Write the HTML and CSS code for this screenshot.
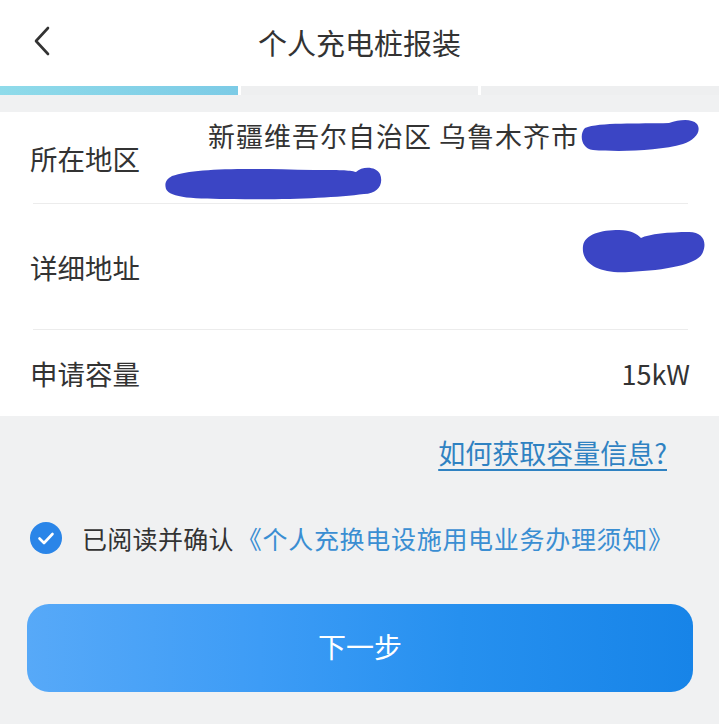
FILE: index.html
```html
<!DOCTYPE html>
<html lang="zh">
<head>
<meta charset="utf-8">
<title>个人充电桩报装</title>
<link rel="stylesheet" href="styles.css">
</head>
<body>
<div class="page">
  <header class="topbar">
    <svg class="back" width="24" height="34" viewBox="0 0 24 34"><polyline points="16,3 4,16 16,29" fill="none" stroke="#333" stroke-width="2.6" stroke-linecap="round" stroke-linejoin="round"/></svg>
    <h1 class="title">个人充电桩报装</h1>
  </header>
  <div class="steps">
    <div class="step active"></div>
    <div class="step"></div>
    <div class="step"></div>
  </div>
  <section class="card">
    <div class="row row-area">
      <div class="label">所在地区</div>
      <div class="value-area">
        <div class="vline">新疆维吾尔自治区 乌鲁木齐市</div>
        <div class="vline">&nbsp;</div>
      </div>
      <svg class="mark mark1" width="122" height="36" viewBox="0 0 122 36"><path d="M6 10 C20 4 60 6 90 5 C100 2 112 0 118 6 C123 13 116 22 104 26 C80 33 40 34 14 32 C2 31 0 16 6 10 Z" fill="#3b45c5"/></svg>
      <svg class="mark mark2" width="220" height="38" viewBox="0 0 220 38"><path d="M8 12 C30 4 80 4 150 6 C175 6 185 6 192 8 C198 2 212 2 216 10 C220 20 214 30 200 30 C170 34 120 36 70 35 C30 35 6 34 2 25 C0 18 3 15 8 12 Z" fill="#3b45c5"/></svg>
    </div>
    <div class="divider"></div>
    <div class="row row-addr">
      <div class="label">详细地址</div>
      <svg class="mark mark3" width="128" height="46" viewBox="0 0 128 46"><path d="M4 18 C6 6 22 2 40 2 C52 2 58 6 62 10 C70 6 90 4 110 4 C124 4 128 14 124 24 C120 36 90 42 50 44 C20 46 2 36 4 18 Z" fill="#3b45c5"/></svg>
    </div>
    <div class="divider"></div>
    <div class="row row-cap">
      <div class="label">申请容量</div>
      <div class="value">15kW</div>
    </div>
  </section>
  <div class="help">
    <a class="help-link">如何获取容量信息?</a>
  </div>
  <div class="agree">
    <span class="check">
      <svg width="32" height="32" viewBox="0 0 32 32"><circle cx="16" cy="16" r="16" fill="#2a85e8"/><polyline points="9.5,16.5 14,21 22.5,12" fill="none" stroke="#fff" stroke-width="2.6" stroke-linecap="round" stroke-linejoin="round"/></svg>
    </span>
    <span class="agree-text">已阅读并确认</span>
    <a class="agree-link">《个人充换电设施用电业务办理须知》</a>
  </div>
  <div class="btn-wrap">
    <button class="next">下一步</button>
  </div>
</div>
</body>
</html>
```
FILE: styles.css
```css
* { box-sizing: border-box; }
html, body { margin: 0; padding: 0; }
body {
  background: #f0f1f2;
  font-family: "Noto Sans CJK SC", "Noto Sans", sans-serif;
  color: #333;
  width: 719px;
  height: 724px;
  overflow: hidden;
}
.page { display: flex; flex-direction: column; }
.topbar {
  height: 86px;
  background: #fff;
  display: flex;
  align-items: center;
  justify-content: center;
  position: relative;
}
.back { position: absolute; left: 32px; top: 25px; }
.title {
  margin: 0;
  font-size: 29px;
  font-weight: 400;
  color: #333;
  margin-top: -3px;
}
.steps {
  display: flex;
  gap: 3px;
  height: 9px;
  background: #fff;
}
.step { flex: 1; background: #eeeff0; }
.step.active { background: linear-gradient(90deg, #8fdbea, #7ccbe6); }
.card {
  margin-top: 17px;
  background: #fff;
  position: relative;
}
.row {
  display: flex;
  align-items: center;
  justify-content: space-between;
  padding: 0 29px 0 30px;
  position: relative;
}
.label { font-size: 27.5px; color: #333; white-space: nowrap; }
.row-area { height: 91px; }
.row-addr { height: 125px; }
.row-cap { height: 86px; }
.value-area {
  width: 482px;
  font-size: 27px;
  line-height: 44px;
  letter-spacing: 1px;
  color: #333;
}
.vline { white-space: nowrap; }
.value { font-size: 27px; color: #333; }
.divider { height: 1px; background: #ececec; margin: 0 31px 0 33px; }
.mark { position: absolute; }
.mark1 { left: 579px; top: 6px; }
.mark2 { left: 164px; top: 52px; }
.mark3 { left: 579px; top: 24px; }
.help {
  display: flex;
  justify-content: flex-end;
  padding: 18px 52px 0 0;
  height: 75px;
}
.help-link {
  font-size: 27px;
  color: #2f82c2;
  text-decoration: underline;
  text-underline-offset: 5px;
  text-decoration-thickness: 1.5px;
  line-height: 38px;
}
.agree {
  display: flex;
  align-items: center;
  padding-left: 30px;
  margin-top: 27px;
  height: 40px;
}
.check { width: 32px; height: 32px; display: flex; margin-right: 20px; }
.agree-text { font-size: 25px; color: #333; letter-spacing: 0.3px; }
.agree-link { font-size: 25px; color: #3a8ed2; margin-left: 3px; letter-spacing: 0.7px; }
.btn-wrap { padding: 46px 26px 0 27px; }
.next {
  width: 100%;
  height: 88px;
  border: none;
  border-radius: 22px;
  background: linear-gradient(90deg, #57a9f8 0%, #3d9cf6 35%, #2690ef 65%, #1784e8 100%);
  color: #fff;
  font-family: inherit;
  font-size: 28px;
  display: flex;
  align-items: center;
  justify-content: center;
  padding: 0;
  padding-bottom: 4px;
}
```
